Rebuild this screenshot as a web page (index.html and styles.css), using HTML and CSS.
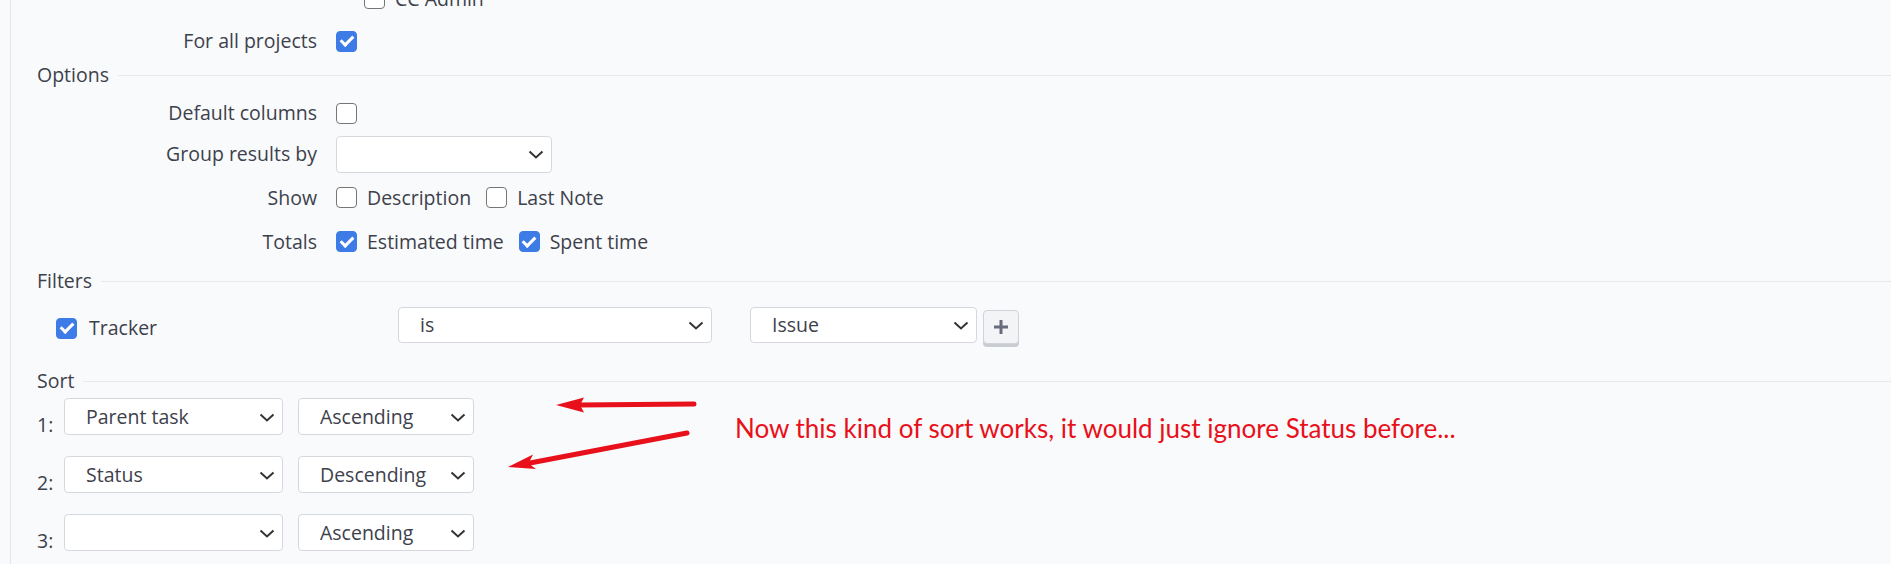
FILE: index.html
```html
<!DOCTYPE html>
<html lang="en">
<head>
  <meta charset="UTF-8">
  <meta name="viewport" content="width=device-width, initial-scale=1.0">
  <title>Query options</title>
  <link rel="stylesheet" href="styles.css">
</head>
<body>

  <div class="content">
    <div class="row">
      <span class="label"></span>
      <div class="controls roles">
        <label class="check-item"><input type="checkbox"> CC Admin</label>
      </div>
    </div>
    <div class="row">
      <label class="label" for="allProjects">For all projects</label>
      <div class="controls">
        <input type="checkbox" id="allProjects" checked>
      </div>
    </div>

    <div class="legend">Options</div>
    <div class="row row-first">
      <label class="label" for="defaultColumns">Default columns</label>
      <div class="controls">
        <input type="checkbox" id="defaultColumns">
      </div>
    </div>
    <div class="row row-wide">
      <label class="label">Group results by</label>
      <div class="controls">
        <span class="select w-group">
          <select><option></option></select>
          <svg class="chevron" width="16" height="9" viewBox="0 0 16 9"><path d="M1.5 1.5 8 7.5 14.5 1.5" fill="none" stroke="#333" stroke-width="2"/></svg>
        </span>
      </div>
    </div>
    <div class="row row-wide">
      <span class="label">Show</span>
      <div class="controls">
        <label class="check-item"><input type="checkbox"> Description</label>
        <label class="check-item"><input type="checkbox"> Last Note</label>
      </div>
    </div>
    <div class="row row-wide">
      <span class="label">Totals</span>
      <div class="controls">
        <label class="check-item"><input type="checkbox" checked> Estimated time</label>
        <label class="check-item"><input type="checkbox" checked> Spent time</label>
      </div>
    </div>

    <div class="legend legend-filters">Filters</div>
    <div class="filter-row">
      <label class="field check-item"><input type="checkbox" checked> Tracker</label>
      <span class="select w-op">
        <select><option>is</option></select>
        <svg class="chevron" width="16" height="9" viewBox="0 0 16 9"><path d="M1.5 1.5 8 7.5 14.5 1.5" fill="none" stroke="#333" stroke-width="2"/></svg>
      </span>
      <span class="select w-val">
        <select><option>Issue</option></select>
        <svg class="chevron" width="16" height="9" viewBox="0 0 16 9"><path d="M1.5 1.5 8 7.5 14.5 1.5" fill="none" stroke="#333" stroke-width="2"/></svg>
      </span>
      <button class="add-btn" type="button">
        <svg width="14" height="14" viewBox="0 0 14 14"><path d="M5.5 0h3v14h-3zM0 5.5h14v3H0z" fill="#686c7e"/></svg>
      </button>
    </div>

    <div class="legend legend-sort">Sort</div>
    <div class="sort-list">
      <div class="sort-row">
        <span class="num">1:</span>
        <span class="select w-field">
          <select><option>Parent task</option></select>
          <svg class="chevron" width="16" height="9" viewBox="0 0 16 9"><path d="M1.5 1.5 8 7.5 14.5 1.5" fill="none" stroke="#333" stroke-width="2"/></svg>
        </span>
        <span class="select w-dir">
          <select><option>Ascending</option></select>
          <svg class="chevron" width="16" height="9" viewBox="0 0 16 9"><path d="M1.5 1.5 8 7.5 14.5 1.5" fill="none" stroke="#333" stroke-width="2"/></svg>
        </span>
      </div>
      <div class="sort-row">
        <span class="num">2:</span>
        <span class="select w-field">
          <select><option>Status</option></select>
          <svg class="chevron" width="16" height="9" viewBox="0 0 16 9"><path d="M1.5 1.5 8 7.5 14.5 1.5" fill="none" stroke="#333" stroke-width="2"/></svg>
        </span>
        <span class="select w-dir">
          <select><option>Descending</option></select>
          <svg class="chevron" width="16" height="9" viewBox="0 0 16 9"><path d="M1.5 1.5 8 7.5 14.5 1.5" fill="none" stroke="#333" stroke-width="2"/></svg>
        </span>
      </div>
      <div class="sort-row">
        <span class="num">3:</span>
        <span class="select w-field">
          <select><option></option></select>
          <svg class="chevron" width="16" height="9" viewBox="0 0 16 9"><path d="M1.5 1.5 8 7.5 14.5 1.5" fill="none" stroke="#333" stroke-width="2"/></svg>
        </span>
        <span class="select w-dir">
          <select><option>Ascending</option></select>
          <svg class="chevron" width="16" height="9" viewBox="0 0 16 9"><path d="M1.5 1.5 8 7.5 14.5 1.5" fill="none" stroke="#333" stroke-width="2"/></svg>
        </span>
      </div>
    </div>
  </div>

  <!-- annotation drawn over the screenshot -->
  <svg class="arrows" width="1891" height="564" viewBox="0 0 1891 564">
    <g fill="#e8101a" stroke="#e8101a">
      <line x1="694" y1="404" x2="578" y2="405" stroke-width="5" stroke-linecap="round"/>
      <polygon points="556,405 584,397.5 580,405 584,412.5" stroke="none"/>
      <line x1="687" y1="433" x2="530" y2="463" stroke-width="5" stroke-linecap="round"/>
      <polygon points="508,467 533,454.5 528.5,463.5 536,469" stroke="none"/>
    </g>
  </svg>
  <div class="note">Now this kind of sort works, it would just ignore Status before...</div>

</body>
</html>
```

FILE: styles.css
```css
html, body {
  margin: 0;
  overflow: hidden;
}

body {
  font-family: "Open Sans", "Noto Sans", sans-serif;
  font-size: 19.5px;
  line-height: 1.4;
  color: #3d414b;
  background-color: #f9fafb;
}

.content {
  margin-left: 10px;
  margin-top: -22px;
  min-height: calc(100vh + 22px);
  border-left: 1px solid #e3e5e9;
}

.row {
  display: flex;
  align-items: center;
  height: 42px;
}

.row-first {
  margin-top: 6px;
  height: 38px;
}

.row-wide {
  height: 44px;
}

.label {
  flex: none;
  width: 306px;
  margin-right: 19px;
  text-align: right;
}

.controls {
  display: flex;
  align-items: center;
  gap: 15px;
}

.roles {
  padding-left: 28px;
}

.check-item {
  display: flex;
  align-items: center;
  gap: 10px;
}

input[type="checkbox"] {
  appearance: none;
  -webkit-appearance: none;
  position: relative;
  flex: none;
  box-sizing: border-box;
  width: 21px;
  height: 21px;
  margin: 0;
  border: 1.5px solid #767676;
  border-radius: 4px;
  background-color: #fff;
}

input[type="checkbox"]:checked {
  border-color: #3d7be7;
  background-color: #3d7be7;
}

input[type="checkbox"]:checked::after {
  content: "";
  position: absolute;
  left: 5.5px;
  top: 1.5px;
  width: 5px;
  height: 10px;
  border: solid #fff;
  border-width: 0 3px 3px 0;
  transform: rotate(45deg);
}

.legend {
  display: flex;
  height: 26px;
  margin-left: 26px;
  line-height: 26px;
}

.legend::after {
  content: "";
  flex: 1;
  height: 1px;
  margin-top: 13px;
  margin-left: 9px;
  background-color: #e7e9ec;
}

.legend-filters {
  margin-top: 4px;
}

.select {
  position: relative;
  display: inline-block;
  flex: none;
  height: 37px;
}

.select select {
  appearance: none;
  -webkit-appearance: none;
  box-sizing: border-box;
  width: 100%;
  height: 100%;
  margin: 0;
  padding: 0 32px 0 21px;
  border: 1px solid #d5d8dd;
  border-radius: 4px;
  background-color: #fff;
  font: inherit;
  color: #3d414b;
}

.chevron {
  position: absolute;
  right: 8px;
  top: 50%;
  margin-top: -4px;
  pointer-events: none;
}

.w-group { width: 216px; }
.w-op { width: 314px; height: 36px; }
.w-val { width: 227px; height: 36px; margin-left: 38px; }
.w-field { width: 219px; }
.w-dir { width: 176px; margin-left: 15px; }

.filter-row {
  display: flex;
  align-items: flex-start;
  height: 36px;
  margin: 13px 0 25px 45px;
}

.field {
  box-sizing: border-box;
  width: 342px;
  height: 36px;
  padding-top: 6px;
  gap: 12px;
}

.add-btn {
  box-sizing: border-box;
  width: 36px;
  height: 34px;
  margin: 3px 0 0 6px;
  padding: 0;
  border: 1px solid #d0d4da;
  border-radius: 4px;
  background-color: #f3f4f6;
  box-shadow: 0 3px 0 #c9cdd3;
  display: flex;
  align-items: center;
  justify-content: center;
}

.sort-list {
  display: flex;
  flex-direction: column;
  gap: 21px;
  margin: 4px 0 0 26px;
}

.sort-row {
  display: flex;
  align-items: flex-start;
  height: 37px;
}

.num {
  width: 16px;
  margin: 13px 11px 0 0;
  line-height: 27px;
}

.arrows {
  position: absolute;
  left: 0;
  top: 0;
  pointer-events: none;
}

.note {
  position: absolute;
  left: 735px;
  top: 413px;
  font-family: Lato, "Liberation Sans", sans-serif;
  font-size: 26px;
  line-height: 30px;
  color: #e8101a;
  white-space: nowrap;
}
```
